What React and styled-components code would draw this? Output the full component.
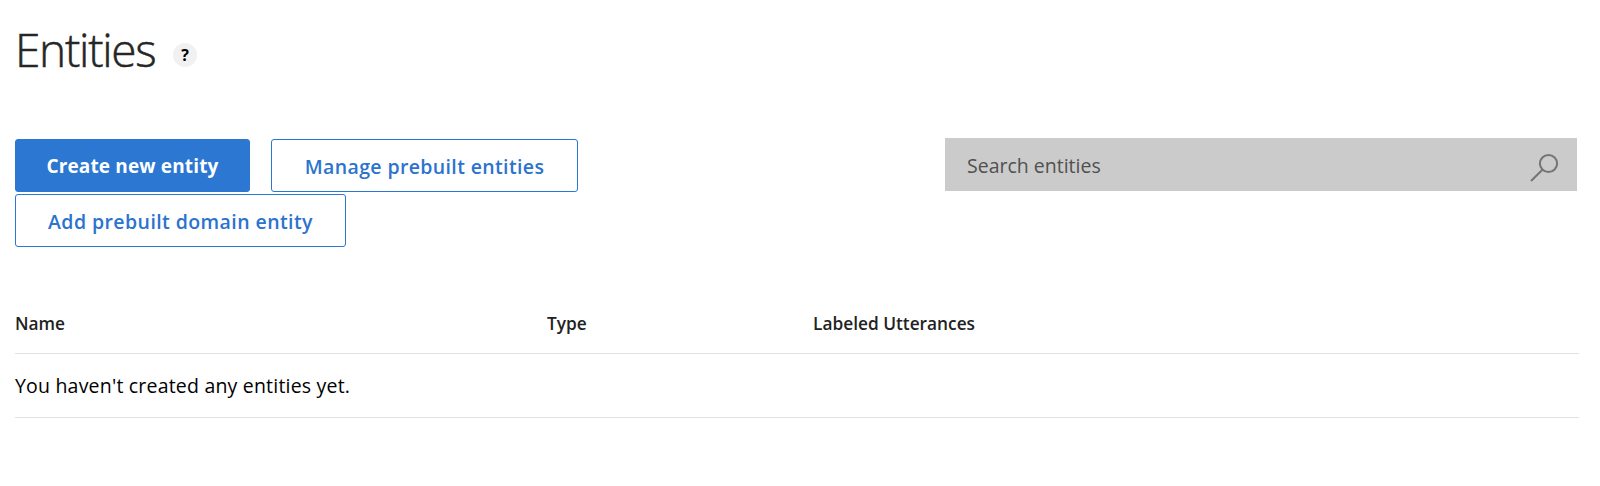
import React from 'react';
import styled, { createGlobalStyle } from 'styled-components';

const Global = createGlobalStyle`
  *, *::before, *::after { box-sizing: border-box; }
  body {
    margin: 0;
    background: #fff;
    color: #000;
    font-family: "Open Sans", "Noto Sans", sans-serif;
  }
`;

const Page = styled.main`
  width: 1600px;
  height: 486px;
  padding: 20px 22px 0 15px;
`;

const Header = styled.header`
  display: flex;
  align-items: center;
  height: 60px;
`;

const Title = styled.h1`
  margin: 0;
  width: 158px;
  font-size: 46px;
  font-weight: 300;
  line-height: 58px;
  padding-bottom: 2px;
  letter-spacing: -1.3px;
  white-space: nowrap;
  color: #262626;
  -webkit-text-stroke: 0.5px #262626;
`;

const Help = styled.button`
  width: 24px;
  height: 24px;
  margin-top: 10px;
  padding: 0;
  border: 0;
  border-radius: 50%;
  background: #f1f1f1;
  color: #000;
  font: 700 16px/24px "Open Sans", "Noto Sans", sans-serif;
`;

const Toolbar = styled.div`
  display: flex;
  justify-content: space-between;
  align-items: flex-start;
  margin-top: 58px;
`;

const Actions = styled.div`
  display: flex;
  flex-wrap: wrap;
  gap: 2px 21px;
  width: 600px;
  padding-top: 1px;
`;

const Button = styled.button`
  width: ${(p) => p.$width}px;
  height: 53px;
  padding: ${(p) => (p.$primary ? '0' : '2px 0 0')};
  border: 1px solid #2b77d1;
  border-radius: 3px;
  background: ${(p) => (p.$primary ? '#2b77d1' : '#fff')};
  color: ${(p) => (p.$primary ? '#fff' : '#2b73cd')};
  font: ${(p) => (p.$primary ? '700 19px/28px' : '600 19.5px/28px')} "Open Sans", "Noto Sans", sans-serif;
  letter-spacing: ${(p) => p.$tracking}px;
  white-space: nowrap;
`;

const Search = styled.label`
  display: flex;
  align-items: center;
  justify-content: space-between;
  width: 632px;
  height: 53px;
  margin-right: 1px;
  padding: 0 18px 0 22px;
  background: #cbcbcb;
`;

const SearchText = styled.span`
  padding-top: 2px;
  font-size: 19.5px;
  line-height: 28px;
  color: #505050;
`;

const SearchIcon = styled.svg`
  width: 30px;
  height: 30px;
  margin-top: 7px;
  fill: none;
  stroke: #747474;
  stroke-width: 2;
`;

const Table = styled.section`
  margin-top: 57px;
  margin-right: -1px;
`;

const HeadRow = styled.div`
  display: grid;
  grid-template-columns: 532px 266px 1fr;
  height: 50px;
  border-bottom: 1px solid #e2e2e2;
`;

const HeadCell = styled.div`
  font-size: 17.3px;
  font-weight: 600;
  line-height: 40px;
  color: #222;
`;

const EmptyRow = styled.div`
  height: 64px;
  border-bottom: 1px solid #e2e2e2;
  font-size: 19.5px;
  line-height: 64px;
  letter-spacing: 0.2px;
`;

export default function App() {
  return (
    <>
      <Global />
      <Page>
        <Header>
          <Title>Entities</Title>
          <Help>?</Help>
        </Header>
        <Toolbar>
          <Actions>
            <Button $primary $width={235} $tracking={0.15}>Create new entity</Button>
            <Button $width={307} $tracking={0.37}>Manage prebuilt entities</Button>
            <Button $width={331} $tracking={0.42}>Add prebuilt domain entity</Button>
          </Actions>
          <Search>
            <SearchText>Search entities</SearchText>
            <SearchIcon viewBox="0 0 30 30">
              <circle cx="19.5" cy="10.5" r="8.6" />
              <path d="M13.4 16.8 2 28" />
            </SearchIcon>
          </Search>
        </Toolbar>
        <Table>
          <HeadRow>
            <HeadCell>Name</HeadCell>
            <HeadCell>Type</HeadCell>
            <HeadCell>Labeled Utterances</HeadCell>
          </HeadRow>
          <EmptyRow>You haven't created any entities yet.</EmptyRow>
        </Table>
      </Page>
    </>
  );
}
